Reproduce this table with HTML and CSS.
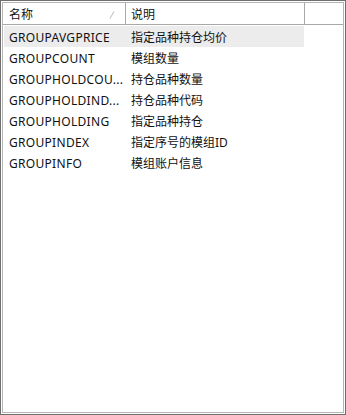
FILE: index.html
```html
<!DOCTYPE html>
<html lang="zh">
<head>
<meta charset="utf-8">
<link rel="stylesheet" href="styles.css">
</head>
<body>
<div class="frame">
  <div class="inner">
    <div class="header">
      <div class="hcell c1"><span>名称</span><svg class="sort" width="6" height="8" viewBox="0 0 6 8"><path d="M1 7.5 L5 0.5" stroke="#b8b8b8" stroke-width="1" fill="none"/></svg></div>
      <div class="hcell c2"><span>说明</span></div>
      <div class="hcell c3"></div>
    </div>
    <div class="list">
      <div class="row sel"><div class="cell c1">GROUPAVGPRICE</div><div class="cell c2">指定品种持仓均价</div></div>
      <div class="row"><div class="cell c1">GROUPCOUNT</div><div class="cell c2">模组数量</div></div>
      <div class="row"><div class="cell c1">GROUPHOLDCOU...</div><div class="cell c2">持仓品种数量</div></div>
      <div class="row"><div class="cell c1">GROUPHOLDIND...</div><div class="cell c2">持仓品种代码</div></div>
      <div class="row"><div class="cell c1">GROUPHOLDING</div><div class="cell c2">指定品种持仓</div></div>
      <div class="row"><div class="cell c1">GROUPINDEX</div><div class="cell c2">指定序号的模组ID</div></div>
      <div class="row"><div class="cell c1">GROUPINFO</div><div class="cell c2">模组账户信息</div></div>
    </div>
  </div>
</div>
</body>
</html>
```
FILE: styles.css
```css
html, body {
  margin: 0;
  padding: 0;
  background: #ffffff;
}
body {
  font-family: "Noto Sans", "Noto Sans CJK SC", sans-serif;
  font-size: 12px;
  color: #111111;
}
.frame {
  width: 346px;
  height: 415px;
  box-sizing: border-box;
  border: 1px solid #6e6e6e;
  padding: 1px;
  background: #fff;
}
.inner {
  height: 100%;
  box-sizing: border-box;
  border: 1px solid #b4b4b4;
  display: flex;
  flex-direction: column;
}
.header {
  display: flex;
  height: 22px;
  border-bottom: 1px solid #a9a9a9;
  box-sizing: border-box;
}
.hcell {
  display: flex;
  align-items: center;
  box-sizing: border-box;
  height: 100%;
}
.hcell.c1 {
  width: 123px;
  padding-left: 6px;
  border-right: 1px solid #a9a9a9;
  position: relative;
}
.hcell.c2 {
  width: 179px;
  padding-left: 5px;
  border-right: 1px solid #a9a9a9;
}
.hcell.c3 {
  flex: 1;
}
.sort {
  position: absolute;
  left: 106px;
  top: 8px;
}
.list {
  padding-top: 1px;
  padding-left: 1px;
  display: flex;
  flex-direction: column;
}
.row {
  display: flex;
  height: 21px;
  width: 300px;
  align-items: center;
  padding-top: 1px;
  box-sizing: border-box;
}
.row.sel {
  background: #ececec;
}
.cell {
  white-space: nowrap;
  overflow: hidden;
  box-sizing: border-box;
}
.cell.c1 {
  width: 122px;
  padding-left: 5px;
  letter-spacing: 0.3px;
}
.cell.c2 {
  padding-left: 5px;
  flex: 1;
}
```
